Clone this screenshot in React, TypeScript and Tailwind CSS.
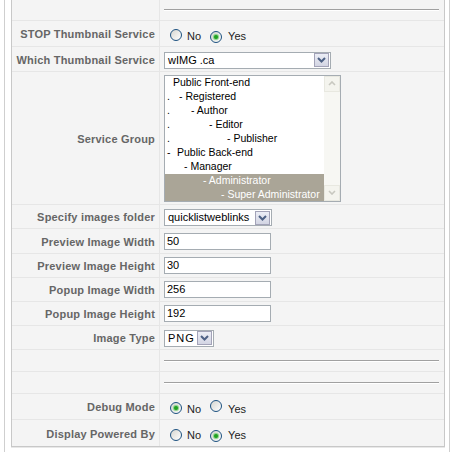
import React from "react";

const sans = "font-['Liberation_Sans',Arial,sans-serif]";

function Radio({ checked = false }: { checked?: boolean }) {
	return (
		<span className="inline-flex h-[12px] w-[12px] shrink-0 items-center justify-center rounded-full border border-[#1c5180] bg-gradient-to-br from-[#d6d6d0] to-white">
			{checked && <span className="h-[4px] w-[4px] rounded-full bg-[#21a121] shadow-[0_0_1px_1px_#7fd07f]" />}
		</span>
	);
}

function RadioPair({ value }: { value: "no" | "yes" }) {
	return (
		<div className="ml-[6px] flex items-center pt-[3px] text-[11px] text-[#222]">
			<Radio checked={value === "no"} />
			<span className="ml-[5px] mt-[2px]">No</span>
			<span className="ml-[9px]">
				<Radio checked={value === "yes"} />
			</span>
			<span className="ml-[6px] mt-[2px]">Yes</span>
		</div>
	);
}

function Chevron() {
	return (
		<span className="flex h-[14px] w-[15px] shrink-0 items-center justify-center border border-[#a3a3b8] bg-gradient-to-b from-[#eceef6] to-[#d3d5e3]">
			<svg width="9" height="6" viewBox="0 0 9 6">
				<path d="M1 1 L4.5 4.5 L8 1" fill="none" stroke="#4d6185" strokeWidth="2" />
			</svg>
		</span>
	);
}

function Select({ text, width, spaced = false }: { text: string; width: string; spaced?: boolean }) {
	return (
		<div className={`flex h-[17px] items-center justify-between border border-[#a5acb2] bg-white pl-[3px] pr-[1px] ${width}`}>
			<span className={`text-[11px] text-black ${spaced ? "tracking-[1px]" : ""}`}>{text}</span>
			<Chevron />
		</div>
	);
}

function TextInput({ value }: { value: string }) {
	return (
		<div className="flex h-[17px] w-[107px] items-center border border-[#a5acb2] bg-white pl-[2px] text-[11px] text-black">
			{value}
		</div>
	);
}

function Hr() {
	return <div className="h-px w-[275px] bg-[#a0a0a0] shadow-[0_1px_0_#fff]" />;
}

type Row = {
	label: string;
	h: string;
	content: React.ReactNode;
	last?: boolean;
};

const groups: { pad: string; dot?: string; text: string; sel?: boolean }[] = [
	{ pad: "pl-[8px]", text: "Public Front-end" },
	{ pad: "pl-[2px]", dot: "w-[12px]", text: "- Registered" },
	{ pad: "pl-[2px]", dot: "w-[24px]", text: "- Author" },
	{ pad: "pl-[2px]", dot: "w-[42px]", text: "- Editor" },
	{ pad: "pl-[2px]", dot: "w-[60px]", text: "- Publisher" },
	{ pad: "pl-[2px]", dot: "w-[10px]", text: "Public Back-end" },
	{ pad: "pl-[19px]", text: "- Manager" },
	{ pad: "pl-[38px]", text: "- Administrator", sel: true },
	{ pad: "pl-[56px]", text: "- Super Administrator", sel: true },
];

function ListBox() {
	return (
		<div className="flex h-[127px] w-[177px] overflow-hidden border border-[#a5acb2] bg-white">
			<div className="flex-1 overflow-hidden">
				{groups.map((g, i) => (
					<div
						key={g.text}
						className={`flex h-[14px] items-center whitespace-pre text-[10.5px] ${g.pad} ${
							g.sel ? "bg-[#aaa597] text-white" : "text-black"
						}`}
					>
						{g.dot && <span className={g.dot}>{i === 5 ? "-" : "."}</span>}
						{g.text}
					</div>
				))}
			</div>
			<div className="flex w-[16px] flex-col justify-between bg-[#f7f7f3]">
				<span className="flex h-[16px] items-center justify-center border border-[#e8e8e0] bg-[#f4f4ee]">
					<svg width="8" height="5" viewBox="0 0 8 5">
						<path d="M1 4 L4 1 L7 4" fill="none" stroke="#c8c8c0" strokeWidth="1.6" />
					</svg>
				</span>
				<span className="flex h-[16px] items-center justify-center border border-[#e8e8e0] bg-[#f4f4ee]">
					<svg width="8" height="5" viewBox="0 0 8 5">
						<path d="M1 1 L4 4 L7 1" fill="none" stroke="#c8c8c0" strokeWidth="1.6" />
					</svg>
				</span>
			</div>
		</div>
	);
}

const rows: Row[] = [
	{ label: "", h: "h-[21px]", content: <div className="pb-[2px]"><Hr /></div> },
	{ label: "STOP Thumbnail Service", h: "h-[26px]", content: <RadioPair value="yes" /> },
	{ label: "Which Thumbnail Service", h: "h-[25px]", content: <div className="pt-[2px]"><Select text="wIMG .ca" width="w-[167px]" /></div> },
	{ label: "Service Group", h: "h-[133px]", content: <ListBox /> },
	{ label: "Specify images folder", h: "h-[24px]", content: <div className="pt-[2px]"><Select text="quicklistweblinks" width="w-[108px]" /></div> },
	{ label: "Preview Image Width", h: "h-[25px]", content: <TextInput value="50" /> },
	{ label: "Preview Image Height", h: "h-[24px]", content: <TextInput value="30" /> },
	{ label: "Popup Image Width", h: "h-[24px]", content: <TextInput value="256" /> },
	{ label: "Popup Image Height", h: "h-[24px]", content: <TextInput value="192" /> },
	{ label: "Image Type", h: "h-[24px]", content: <div className="pt-[1px]"><Select text="PNG" width="w-[50px]" spaced /></div> },
	{ label: "", h: "h-[22px]", content: <Hr /> },
	{ label: "", h: "h-[22px]", content: <Hr /> },
	{ label: "Debug Mode", h: "h-[26px]", content: <RadioPair value="no" /> },
	{ label: "Display Powered By", h: "h-[26px]", content: <RadioPair value="yes" />, last: true },
];

export default function App() {
	return (
		<div className={`min-h-[452px] bg-white pl-[4px] ${sans}`}>
			<div className="min-h-[452px] w-[446px] border-x border-[#cfcfcf] pl-[6px] pr-[4px]">
				<div className="border-x border-b border-[#c8c8c8] bg-[#f4f4f4] shadow-[0_1px_0_#e8e8e8]">
					{rows.map((r, i) => (
						<div key={i} className={`flex ${r.h} ${r.last ? "" : "border-b border-[#e6e6e6]"}`}>
							<div className="flex w-[148px] shrink-0 items-center justify-end border-r border-[#e6e6e6] pr-[4px] pt-[2px] text-[11px] font-bold tracking-[0.2px] text-[#666]">
								{r.label}
							</div>
							<div className="flex flex-1 items-center pl-[4px]">{r.content}</div>
						</div>
					))}
				</div>
			</div>
		</div>
	);
}
